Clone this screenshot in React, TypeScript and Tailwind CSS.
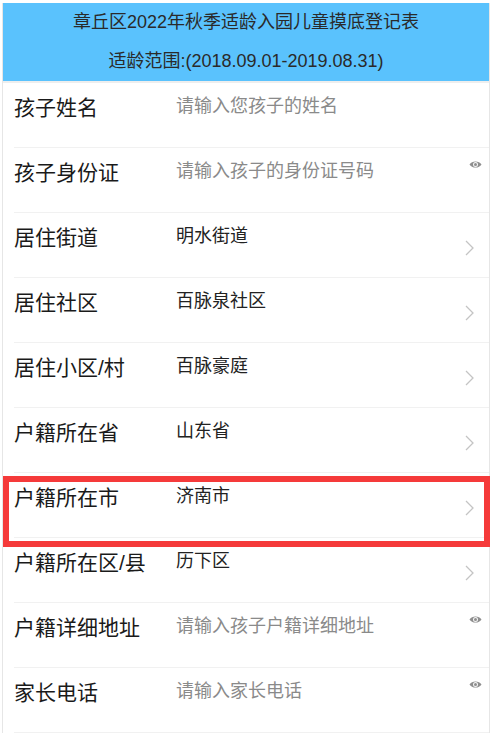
import React from "react";

type Row = {
  label: string;
  value: string;
  placeholder?: boolean;
  trail?: "eye" | "chevron";
};

const ROWS: Row[] = [
  { label: "孩子姓名", value: "请输入您孩子的姓名", placeholder: true },
  { label: "孩子身份证", value: "请输入孩子的身份证号码", placeholder: true, trail: "eye" },
  { label: "居住街道", value: "明水街道", trail: "chevron" },
  { label: "居住社区", value: "百脉泉社区", trail: "chevron" },
  { label: "居住小区/村", value: "百脉豪庭", trail: "chevron" },
  { label: "户籍所在省", value: "山东省", trail: "chevron" },
  { label: "户籍所在市", value: "济南市", trail: "chevron" },
  { label: "户籍所在区/县", value: "历下区", trail: "chevron" },
  { label: "户籍详细地址", value: "请输入孩子户籍详细地址", placeholder: true, trail: "eye" },
  { label: "家长电话", value: "请输入家长电话", placeholder: true, trail: "eye" },
];

function Eye() {
  return (
    <svg width="13" height="9" viewBox="0 0 13 9" className="mr-[7px] mt-[1px] shrink-0">
      <path d="M0.5 4.5 C2.8 0.4 10.2 0.4 12.5 4.5 C10.2 8.6 2.8 8.6 0.5 4.5 Z" fill="#8f8f8f" />
      <circle cx="6.5" cy="4.5" r="2.5" fill="#f4f4f4" />
      <circle cx="6.5" cy="4.5" r="1.5" fill="#8f8f8f" />
    </svg>
  );
}

function Chevron() {
  return (
    <svg width="9" height="16" viewBox="0 0 9 16" className="mr-[15px] mt-[16px] shrink-0">
      <polyline points="1,1 8,8 1,15" fill="none" stroke="#c4c4c4" strokeWidth="1.3" />
    </svg>
  );
}

export default function App() {
  return (
    <div className="relative min-h-screen bg-white pl-[2px] pt-[3px] font-['Liberation_Sans','Noto_Sans_CJK_SC',sans-serif]">
      <div className="w-[488px] border-l border-r border-[#e6e6e6]">
        <div className="bg-[#5ac2fd] text-center text-[18px] leading-[39px] text-[#2a2a2a]">
          <div>章丘区2022年秋季适龄入园儿童摸底登记表</div>
          <div>适龄范围:(2018.09.01-2019.08.31)</div>
        </div>
        <div className="h-[2px] bg-[#eeeeee]" />
        {ROWS.map((r) => (
          <div key={r.label} className="ml-[11px] flex h-[65px] items-start border-b border-[#f1f1f1] pt-[11px]">
            <div className="w-[162px] shrink-0 text-[21px] leading-[28px] text-[#1a1a1a]">{r.label}</div>
            <div
              className={
                "flex-1 text-[18px] leading-[24px] " + (r.placeholder ? "text-[#8a8a8a]" : "text-[#222222]")
              }
            >
              {r.value}
            </div>
            {r.trail === "eye" && <Eye />}
            {r.trail === "chevron" && <Chevron />}
          </div>
        ))}
      </div>
      {/* highlight box drawn over the screenshot */}
      <div className="pointer-events-none absolute left-[3px] top-[476px] h-[71px] w-[487px] border-[6px] border-[#f53a3a]" />
    </div>
  );
}
